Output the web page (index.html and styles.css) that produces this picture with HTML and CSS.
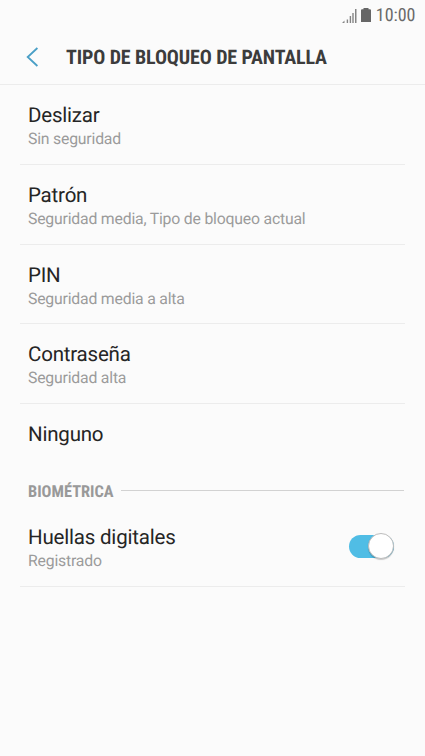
FILE: index.html
```html
<!DOCTYPE html>
<html lang="es">
<head>
<meta charset="utf-8">
<title>Tipo de bloqueo de pantalla</title>
<link rel="stylesheet" href="styles.css">
</head>
<body>
<div class="status">
  <svg class="signal" width="15" height="14" viewBox="0 0 15 14" fill="#858585"><path d="M0 14 2.500 11.500V14zM4.700 10.500h1.400v3.500H4.700zM7.700 7h1.400v7H7.700zM10.300 4h1.400v10h-1.400zM13 0h1.500v14H13z"/></svg>
  <svg class="battery" width="10" height="14" viewBox="0 0 10 14" fill="#666"><path d="M2.500 0h5v1.300H9a1 1 0 0 1 1 1V14H0V2.300a1 1 0 0 1 1-1h1.500z"/></svg>
  <span class="clock">10:00</span>
</div>
<header class="header">
  <svg class="back" width="13" height="20" viewBox="0 0 13 20" fill="none" stroke="#4a9fc6" stroke-width="1.8"><path d="M11.400 1 1.700 10l9.700 9"/></svg>
  <h1 class="heading">TIPO DE BLOQUEO DE PANTALLA</h1>
</header>
<main>
  <ul class="list">
    <li class="row"><span class="title">Deslizar</span><span class="sub">Sin seguridad</span></li>
    <li class="row"><span class="title">Patrón</span><span class="sub">Seguridad media, Tipo de bloqueo actual</span></li>
    <li class="row"><span class="title">PIN</span><span class="sub">Seguridad media a alta</span></li>
    <li class="row"><span class="title">Contraseña</span><span class="sub">Seguridad alta</span></li>
    <li class="row last"><span class="title">Ninguno</span></li>
  </ul>
  <div class="section"><h2 class="section-name">BIOMÉTRICA</h2><span class="rule"></span></div>
  <div class="row biometric">
    <span class="title">Huellas digitales</span><span class="sub">Registrado</span>
    <span class="switch"><span class="knob"></span></span>
  </div>
</main>
</body>
</html>
```
FILE: styles.css
```css
* { box-sizing: border-box; }
body { margin: 0; height: 756px; background: #fbfbfb; font-family: Roboto, sans-serif; color: #252525; text-rendering: geometricPrecision; }
h1, h2, ul { margin: 0; padding: 0; }
.status { height: 30px; display: flex; justify-content: flex-end; align-items: center; padding-right: 9.5px; }
.signal { margin-top: 1px; }
.battery { margin: 0 4.5px 0 4px; }
.clock { font-family: "Roboto Condensed", Roboto, sans-serif; font-stretch: 75%; font-size: 18px; line-height: 22px; color: #696969; margin-top: 1px; }
.header { height: 55px; border-bottom: 1px solid #ececec; display: flex; align-items: center; padding-left: 26px; }
.heading { margin-left: 27px; font-family: "Roboto Condensed", Roboto, sans-serif; font-stretch: 75%; font-size: 20px; letter-spacing: -0.13px; line-height: 24px; font-weight: 700; color: #3c3c3c; white-space: nowrap; }
.list { list-style: none; }
.row { position: relative; height: 79.75px; margin: 0 20px; padding: 18px 8px 0; border-bottom: 1px solid #ececec; }
.title, .sub { display: block; white-space: nowrap; }
.title { font-size: 20.5px; letter-spacing: -0.2px; line-height: 26px; }
.sub { margin-top: -1px; font-size: 15.8px; letter-spacing: -0.2px; line-height: 22px; color: #9b9b9b; }
.last { height: 66px; border: 0; }
.section { display: flex; align-items: center; height: 42px; padding: 0 21px 0 28px; }
.section-name { margin-top: 3px; font-family: "Roboto Condensed", Roboto, sans-serif; font-stretch: 75%; font-size: 16.4px; line-height: 20px; font-weight: 700; color: #999; }
.rule { flex: 1; height: 1px; margin: 0 0 1.5px 7.5px; background: #d2d2d2; }
.biometric { height: 75px; padding-top: 13px; }
.switch { position: absolute; right: 11px; top: 23px; width: 45px; height: 23px; border-radius: 12px; background: #50bde5; }
.knob { position: absolute; right: 0; top: -2px; width: 26px; height: 26px; border-radius: 50%; background: #fff; border: 1px solid #bdbdbd; box-shadow: 0 1px 1px rgba(0,0,0,.2); }
```
